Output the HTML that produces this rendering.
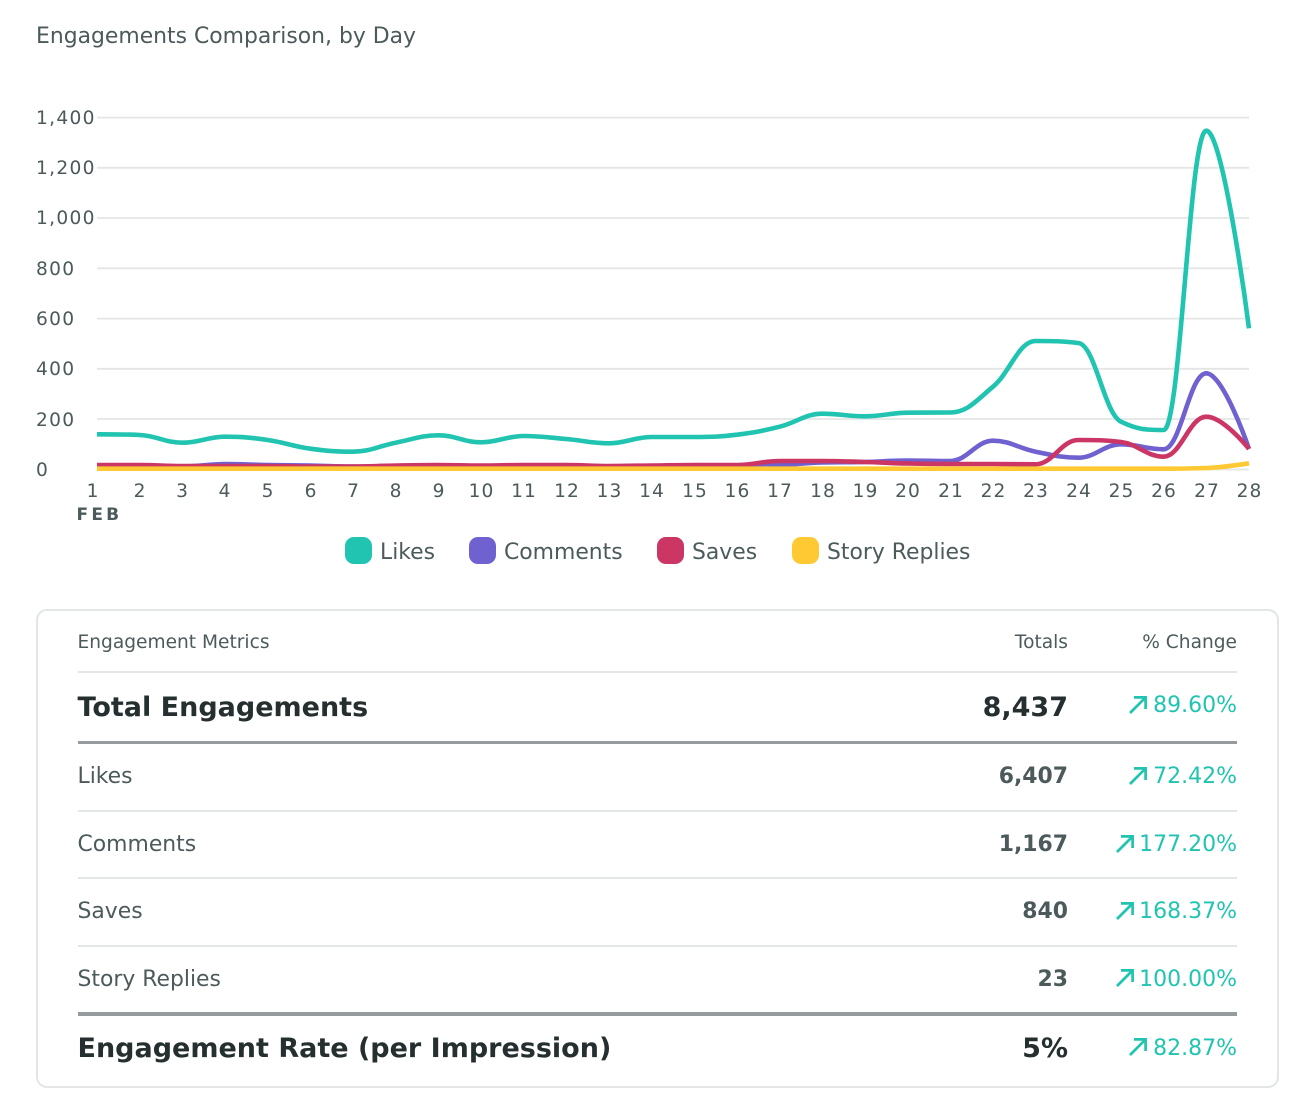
<!DOCTYPE html>
<html lang="en">
<head>
<meta charset="utf-8">
<title>Engagements Comparison, by Day</title>
<style>
html,body{margin:0;padding:0;background:#fff;}
body{position:relative;width:1314px;height:1116px;overflow:hidden;font-family:"DejaVu Sans","Liberation Sans",sans-serif;color:#4c5a5c;}
.t{position:absolute;white-space:nowrap;line-height:1;}
.ya{font-size:18.6px;letter-spacing:1.3px;left:36px;margin-top:0.3px;}
.xa{font-size:18.6px;letter-spacing:1px;top:483px;width:40px;text-align:center;}
.lg{font-size:21.9px;top:541.7px;}
.sw{position:absolute;top:536.5px;width:27px;height:27px;border-radius:9px;}
.r{text-align:right;}
.lab{font-size:21.9px;left:77.5px;}
.tot{font-size:21.9px;font-weight:bold;right:246px;}
.chg{font-size:22px;color:#20c4b0;right:77px;}
.big{font-size:27px;font-weight:bold;color:#262f30;}
.hd{font-size:18.6px;top:633.7px;}
.ln{position:absolute;left:78px;width:1159px;height:2px;background:#e3e6e6;}
.th{height:3.6px;background:#969c9d;}
.ar{position:absolute;width:18px;height:18px;}
svg{position:absolute;left:0;top:0;}
</style>
</head>
<body>
<div class="t" style="left:36px;top:25.7px;font-size:21.9px;">Engagements Comparison, by Day</div>

<svg width="1314" height="600" viewBox="0 0 1314 600" fill="none">
<g stroke="#e4e6e6" stroke-width="1.8">
<path d="M97 117.6H1249M97 167.8H1249M97 218H1249M97 268.3H1249M97 318.6H1249M97 368.8H1249M97 419H1249M97 469.5H1249"/>
</g>
<g stroke-width="4.6" stroke-linejoin="round" fill="none">
<path id="p0" stroke="#20c4b0"/>
<path id="p1" stroke="#6f61d0"/>
<path id="p2" stroke="#cb3665"/>
<path id="p3" stroke="#ffc933"/>
</g>
</svg>

<div class="t ya" style="top:109.5px;">1,400</div>
<div class="t ya" style="top:159.7px;">1,200</div>
<div class="t ya" style="top:210px;">1,000</div>
<div class="t ya" style="top:260.7px;">800</div>
<div class="t ya" style="top:310.5px;">600</div>
<div class="t ya" style="top:360.7px;">400</div>
<div class="t ya" style="top:411.6px;">200</div>
<div class="t ya" style="top:461.6px;">0</div>

<div class="t xa" style="left:73px;">1</div>
<div class="t xa" style="left:120px;">2</div>
<div class="t xa" style="left:162.5px;">3</div>
<div class="t xa" style="left:205px;">4</div>
<div class="t xa" style="left:248px;">5</div>
<div class="t xa" style="left:291px;">6</div>
<div class="t xa" style="left:333.5px;">7</div>
<div class="t xa" style="left:376px;">8</div>
<div class="t xa" style="left:419px;">9</div>
<div class="t xa" style="left:461.5px;">10</div>
<div class="t xa" style="left:504px;">11</div>
<div class="t xa" style="left:547px;">12</div>
<div class="t xa" style="left:589.5px;">13</div>
<div class="t xa" style="left:632px;">14</div>
<div class="t xa" style="left:675px;">15</div>
<div class="t xa" style="left:717.5px;">16</div>
<div class="t xa" style="left:760px;">17</div>
<div class="t xa" style="left:803px;">18</div>
<div class="t xa" style="left:845.5px;">19</div>
<div class="t xa" style="left:888px;">20</div>
<div class="t xa" style="left:931px;">21</div>
<div class="t xa" style="left:973.5px;">22</div>
<div class="t xa" style="left:1016px;">23</div>
<div class="t xa" style="left:1059px;">24</div>
<div class="t xa" style="left:1101.5px;">25</div>
<div class="t xa" style="left:1144px;">26</div>
<div class="t xa" style="left:1187px;">27</div>
<div class="t xa" style="left:1229.5px;">28</div>
<div class="t" style="left:76.5px;top:507px;font-size:17px;font-weight:bold;letter-spacing:3.2px;">FEB</div>

<div class="sw" style="left:344.5px;background:#20c4b0;"></div>
<div class="t lg" style="left:380px;">Likes</div>
<div class="sw" style="left:469.3px;background:#6f61d0;"></div>
<div class="t lg" style="left:504px;">Comments</div>
<div class="sw" style="left:656.7px;background:#cb3665;"></div>
<div class="t lg" style="left:692px;">Saves</div>
<div class="sw" style="left:791.7px;background:#ffc933;"></div>
<div class="t lg" style="left:827px;">Story Replies</div>

<div style="position:absolute;left:36px;top:609px;width:1238.5px;height:474.5px;border:2px solid #e3e6e6;border-radius:11px;"></div>

<div class="t hd" style="left:77.5px;">Engagement Metrics</div>
<div class="t hd r" style="right:246px;">Totals</div>
<div class="t hd r" style="right:77px;">% Change</div>

<div class="ln" style="top:671px;"></div>
<div class="ln th" style="top:740.7px;"></div>
<div class="ln" style="top:809.5px;"></div>
<div class="ln" style="top:877px;"></div>
<div class="ln" style="top:945px;"></div>
<div class="ln th" style="top:1012.2px;"></div>

<div class="t big" style="left:77.5px;top:693.7px;">Total Engagements</div>
<div class="t big r" style="right:246px;top:693.7px;">8,437</div>
<div class="t chg" style="top:695px;">89.60%</div>

<div class="t lab" style="top:766px;">Likes</div>
<div class="t tot" style="top:766px;">6,407</div>
<div class="t chg" style="top:766px;">72.42%</div>

<div class="t lab" style="top:834px;">Comments</div>
<div class="t tot" style="top:834px;">1,167</div>
<div class="t chg" style="top:834px;">177.20%</div>

<div class="t lab" style="top:901px;">Saves</div>
<div class="t tot" style="top:901px;">840</div>
<div class="t chg" style="top:901px;">168.37%</div>

<div class="t lab" style="top:969px;">Story Replies</div>
<div class="t tot" style="top:969px;">23</div>
<div class="t chg" style="top:969px;">100.00%</div>

<div class="t big" style="left:77.5px;top:1035px;">Engagement Rate (per Impression)</div>
<div class="t big r" style="right:246px;top:1035px;">5%</div>
<div class="t chg" style="top:1038px;">82.87%</div>

<svg class="ar" style="left:1129px;top:695.5px;" viewBox="0 0 18 18" fill="none" stroke="#20c4b0" stroke-width="2.7"><path d="M1 17L16.5 1.5M5 1.4H16.6V13"/></svg>
<svg class="ar" style="left:1129px;top:766.5px;" viewBox="0 0 18 18" fill="none" stroke="#20c4b0" stroke-width="2.7"><path d="M1 17L16.5 1.5M5 1.4H16.6V13"/></svg>
<svg class="ar" style="left:1116px;top:834.5px;" viewBox="0 0 18 18" fill="none" stroke="#20c4b0" stroke-width="2.7"><path d="M1 17L16.5 1.5M5 1.4H16.6V13"/></svg>
<svg class="ar" style="left:1116px;top:901.5px;" viewBox="0 0 18 18" fill="none" stroke="#20c4b0" stroke-width="2.7"><path d="M1 17L16.5 1.5M5 1.4H16.6V13"/></svg>
<svg class="ar" style="left:1116px;top:968.5px;" viewBox="0 0 18 18" fill="none" stroke="#20c4b0" stroke-width="2.7"><path d="M1 17L16.5 1.5M5 1.4H16.6V13"/></svg>
<svg class="ar" style="left:1129px;top:1037.5px;" viewBox="0 0 18 18" fill="none" stroke="#20c4b0" stroke-width="2.7"><path d="M1 17L16.5 1.5M5 1.4H16.6V13"/></svg>

<script>
(function(){
var S=[
[434.3,435,442.7,436.7,440,448.7,451.7,442.7,435.3,442.3,436,439,443.3,437,437,434.7,426.7,413.7,416.3,412.7,412.5,386.7,341,343,421.7,430,130.7,328.3],
[466,466,466.5,464,465,465.5,466.5,466,466,466,466,466,466.5,466,465.5,465.5,465,462.5,462,460.5,461,440.7,451.7,457.7,444.3,449.3,373.3,449],
[465,465,466,466,466,466.5,466.5,465.5,465,465.5,465,465,466,465.5,465,465,461,461,462,463.5,464,464,464.3,440,442,456.7,416.7,449],
[468.7,468.7,468.7,468.7,468.7,468.7,468.7,468.7,468.7,468.7,468.7,468.7,468.7,468.7,468.7,468.7,468.7,468.7,468.7,468.7,468.7,468.7,468.7,468.7,468.7,468.7,468,463.3]
];
var x0=97,st=(1249-97)/27,sm=1.5,dn=2.5;
function cp(xs,ys,i){
 var x=xs[i],y=ys[i],lx=xs[i-1],ly=ys[i-1],nx=xs[i+1],ny=ys[i+1];
 var lcx=(sm*x+lx)/dn,lcy=(sm*y+ly)/dn,rcx=(sm*x+nx)/dn,rcy=(sm*y+ny)/dn;
 var c=((rcy-lcy)*(rcx-x))/(rcx-lcx)+y-rcy;
 lcy+=c;rcy+=c;
 if(lcy>ly&&lcy>y){lcy=Math.max(ly,y);rcy=2*y-lcy;}
 else if(lcy<ly&&lcy<y){lcy=Math.min(ly,y);rcy=2*y-lcy;}
 if(rcy>ny&&rcy>y){rcy=Math.max(ny,y);lcy=2*y-rcy;}
 else if(rcy<ny&&rcy<y){rcy=Math.min(ny,y);lcy=2*y-rcy;}
 return [lcx,lcy,rcx,rcy];
}
S.forEach(function(ys,k){
 var xs=ys.map(function(_,i){return x0+i*st;}),n=ys.length;
 var d="M"+xs[0].toFixed(2)+" "+ys[0];
 for(var i=1;i<n;i++){
  var a=i>1?cp(xs,ys,i-1):[0,0,xs[0],ys[0]];
  var b=i<n-1?cp(xs,ys,i):[xs[i],ys[i],0,0];
  d+="C"+a[2].toFixed(2)+" "+a[3].toFixed(2)+" "+b[0].toFixed(2)+" "+b[1].toFixed(2)+" "+xs[i].toFixed(2)+" "+ys[i];
 }
 document.getElementById("p"+k).setAttribute("d",d);
});
})();
</script>
</body>
</html>
